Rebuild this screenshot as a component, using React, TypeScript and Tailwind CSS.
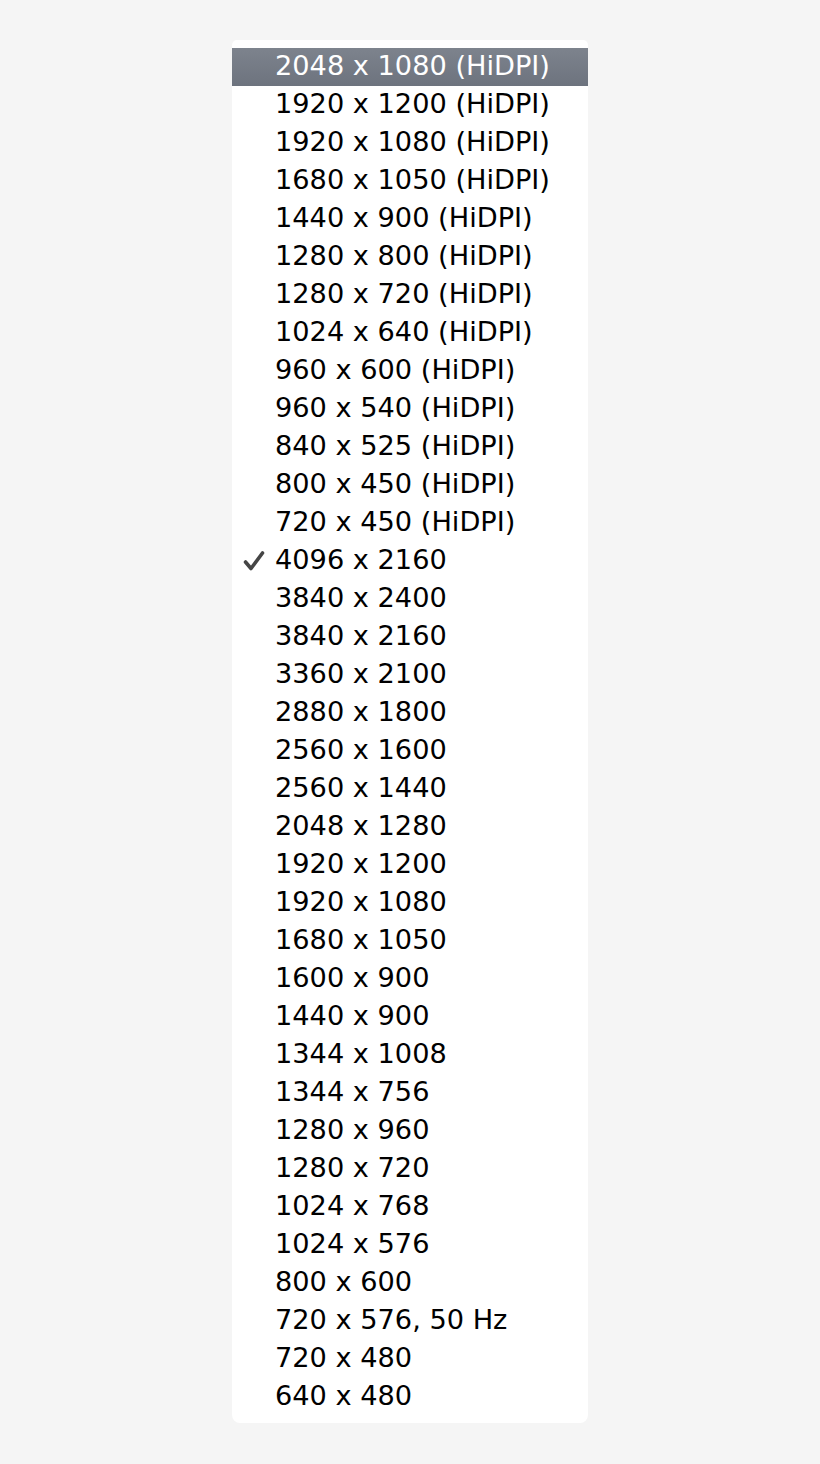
import React from 'react';

const hidpi = [
    '2048 x 1080', '1920 x 1200', '1920 x 1080', '1680 x 1050', '1440 x 900', '1280 x 800',
    '1280 x 720', '1024 x 640', '960 x 600', '960 x 540', '840 x 525', '800 x 450', '720 x 450'
];

const normal = [
    '4096 x 2160', '3840 x 2400', '3840 x 2160', '3360 x 2100', '2880 x 1800', '2560 x 1600',
    '2560 x 1440', '2048 x 1280', '1920 x 1200', '1920 x 1080', '1680 x 1050', '1600 x 900',
    '1440 x 900', '1344 x 1008', '1344 x 756', '1280 x 960', '1280 x 720', '1024 x 768',
    '1024 x 576', '800 x 600', '720 x 576, 50 Hz', '720 x 480', '640 x 480'
];

const items = [...hidpi.map(r => `${r} (HiDPI)`), ...normal];

const App: React.FC = () => {
    return (
        <div className="min-h-[1464px] w-full bg-[#f5f5f5] pt-10" style={{ fontFamily: '"DejaVu Sans", "Liberation Sans", sans-serif' }}>
            <div className="ml-[232px] w-[356px] rounded-b-lg rounded-t-[5px] bg-white pt-2 pb-[7px]">
                {items.map((label, i) => {
                    const selected = i === 0;
                    const checked = label === '4096 x 2160';
                    return (
                        <div
                            key={i}
                            className={`relative flex h-[38px] items-center pb-[3px] pl-[43px] text-[27.2px] leading-none whitespace-nowrap ${selected
                                ? 'bg-gradient-to-b from-[#7d838d] to-[#6d737e] text-white'
                                : 'text-black'
                                }`}
                        >
                            {checked && (
                                <svg className="absolute left-[11px] top-[8px] h-[22px] w-[22px]" viewBox="0 0 22 22">
                                    <path d="M2.5 12 L8 18.5 L19.5 3" fill="none" stroke="#454545" strokeWidth="3.6" strokeLinecap="round" strokeLinejoin="round" />
                                </svg>
                            )}
                            <span>{label}</span>
                        </div>
                    );
                })}
            </div>
        </div>
    );
};

export default App;
